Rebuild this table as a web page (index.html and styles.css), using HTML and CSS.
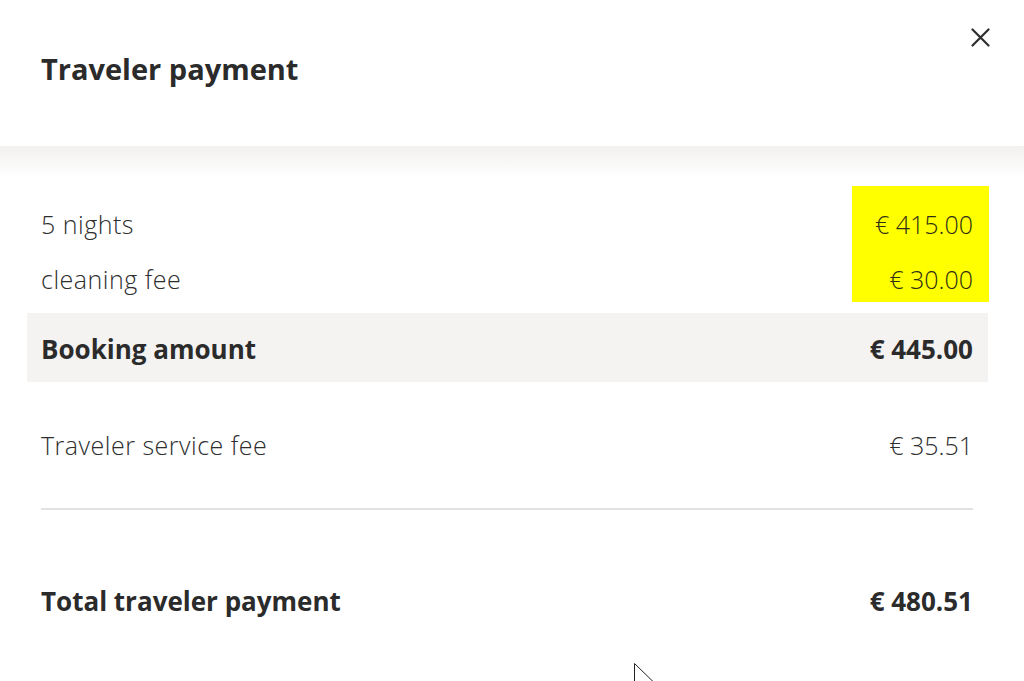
FILE: index.html
```html
<!DOCTYPE html>
<html lang="en">
<head>
<meta charset="utf-8">
<title>Traveler payment</title>
<link rel="stylesheet" href="styles.css">
</head>
<body>
<div class="modal">
  <header class="header">
    <h1 class="title">Traveler payment</h1>
    <button class="close" aria-label="Close">
      <svg width="19" height="19" viewBox="0 0 19 19"><path d="M1.5 1.5 L17.5 17.5 M17.5 1.5 L1.5 17.5" stroke="#2d2d2d" stroke-width="2.2" stroke-linecap="round" fill="none"/></svg>
    </button>
  </header>
  <div class="fade"></div>
  <section class="items">
    <div class="col labels">
      <div class="row">5 nights</div>
      <div class="row">cleaning fee</div>
    </div>
    <div class="col amounts highlight">
      <div class="row">€ 415.00</div>
      <div class="row">€ 30.00</div>
    </div>
  </section>
  <div class="subtotal">
    <span>Booking amount</span>
    <span>€ 445.00</span>
  </div>
  <div class="line fee">
    <span class="label">Traveler service fee</span>
    <span>€ 35.51</span>
  </div>
  <hr class="divider">
  <div class="line total">
    <span>Total traveler payment</span>
    <span>€ 480.51</span>
  </div>
  <svg class="cursor" width="22" height="32" viewBox="0 0 22 32"><path d="M0.5 0.5 L0.5 26 L6.5 20 L11 30.5 L15 29 L10.5 18.5 L19 18.5 Z" fill="#fff" stroke="#222" stroke-width="1"/></svg>
</div>
</body>
</html>
```

FILE: styles.css
```css
* { box-sizing: border-box; }
html, body { margin: 0; padding: 0; background: #fff; }
body {
  font-family: "Open Sans", "Liberation Sans", sans-serif;
  color: #2e2e2e;
  width: 1024px;
  height: 681px;
  overflow: hidden;
}
.modal { position: relative; height: 681px; }
.header {
  height: 146px;
  display: flex;
  justify-content: space-between;
  align-items: flex-start;
  padding: 0 34px 0 41px;
}
.title {
  margin: 50px 0 0;
  font-size: 29px;
  line-height: 38px;
  font-weight: 700;
  color: #2b2b2b;
}
.close {
  margin-top: 28px;
  padding: 0;
  border: 0;
  background: none;
  width: 19px;
  height: 19px;
  cursor: pointer;
}
.close svg { display: block; }
.fade {
  height: 32px;
  background: linear-gradient(#f2f1ef, #ffffff);
}
.items {
  margin-top: 8px;
  display: flex;
  justify-content: space-between;
  padding: 0 35px 0 41px;
}
.col {
  display: flex;
  flex-direction: column;
  gap: 15px;
  padding: 18px 0 3px;
}
.row {
  height: 40px;
  line-height: 40px;
  font-size: 25px;
  font-weight: 300;
  color: #2e2e2e;
}
.labels .row, .label { letter-spacing: 0.5px; }
.amounts { text-align: right; }
.highlight {
  background: #ffff00;
  width: 137px;
  padding-right: 16px;
}
.highlight .row { color: #2f2f14; }
.subtotal {
  margin: 11px 36px 0 27px;
  height: 69px;
  background: #f4f3f1;
  display: flex;
  justify-content: space-between;
  align-items: center;
  padding: 3px 15px 0 14px;
  font-size: 26px;
  font-weight: 700;
  color: #2b2b2b;
}
.line {
  display: flex;
  justify-content: space-between;
  align-items: center;
  height: 40px;
  padding: 0 51px 0 41px;
}
.fee {
  margin-top: 43px;
  font-size: 25px;
  font-weight: 300;
  color: #2e2e2e;
}
.divider {
  margin: 43px 51px 0 41px;
  border: 0;
  height: 2px;
  background: #e2e2e2;
}
.total {
  margin-top: 71px;
  font-size: 26px;
  font-weight: 700;
  color: #2b2b2b;
}
.cursor {
  position: absolute;
  left: 634px;
  top: 663px;
}
```
